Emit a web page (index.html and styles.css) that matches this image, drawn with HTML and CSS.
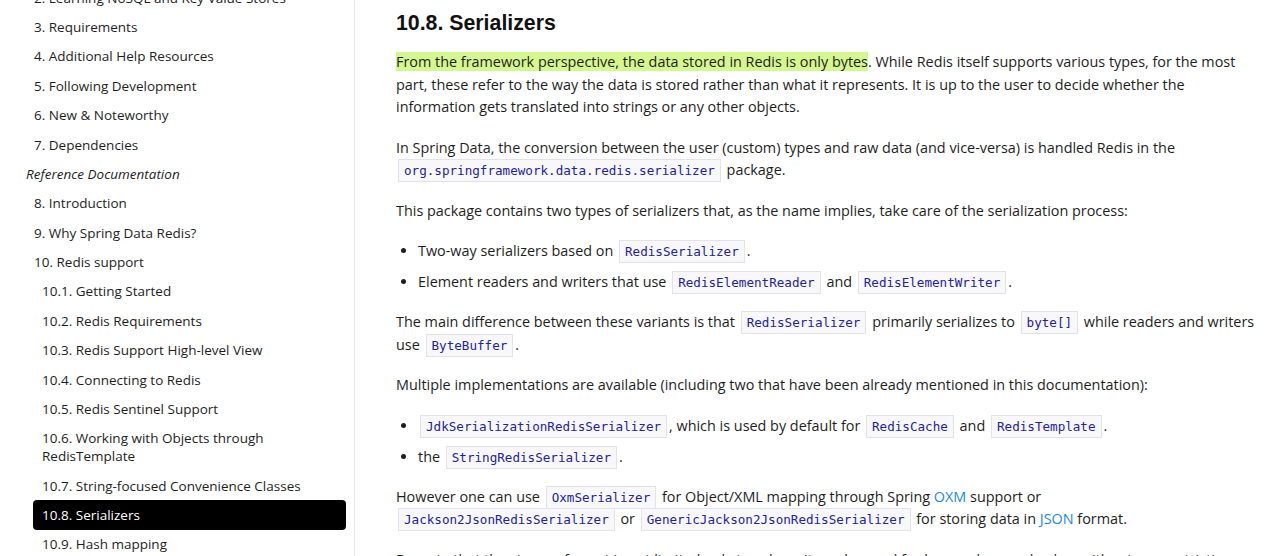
FILE: index.html
```html
<!DOCTYPE html>
<html lang="en">
<head>
  <meta charset="UTF-8">
  <meta name="viewport" content="width=device-width, initial-scale=1.0">
  <link rel="stylesheet" href="styles.css">
</head>
<body>

  <div class="page">
    <nav class="toc">
      <ul class="toc-list">
        <li><a href="#">2. Learning NoSQL and Key Value Stores</a></li>
        <li><a href="#">3. Requirements</a></li>
        <li><a href="#">4. Additional Help Resources</a></li>
        <li><a href="#">5. Following Development</a></li>
        <li><a href="#">6. New &amp; Noteworthy</a></li>
        <li><a href="#">7. Dependencies</a></li>
        <li class="toc-caption">Reference Documentation</li>
        <li><a href="#">8. Introduction</a></li>
        <li><a href="#">9. Why Spring Data Redis?</a></li>
        <li>
          <a href="#">10. Redis support</a>
          <ul class="toc-sub">
            <li><a href="#">10.1. Getting Started</a></li>
            <li><a href="#">10.2. Redis Requirements</a></li>
            <li><a href="#">10.3. Redis Support High-level View</a></li>
            <li><a href="#">10.4. Connecting to Redis</a></li>
            <li><a href="#">10.5. Redis Sentinel Support</a></li>
            <li><a href="#">10.6. Working with Objects through RedisTemplate</a></li>
            <li><a href="#">10.7. String-focused Convenience Classes</a></li>
            <li><a href="#" class="active">10.8. Serializers</a></li>
            <li><a href="#">10.9. Hash mapping</a></li>
          </ul>
        </li>
      </ul>
    </nav>

    <main class="content">
      <h2>10.8. Serializers</h2>

      <p><mark>From the framework perspective, the data stored in Redis is only bytes</mark>. While Redis itself supports various types, for the most part, these refer to the way the data is stored rather than what it represents. It is up to the user to decide whether the information gets translated into strings or any other objects.</p>

      <p>In Spring Data, the conversion between the user (custom) types and raw data (and vice-versa) is handled Redis in the <code>org.springframework.data.redis.serializer</code> package.</p>

      <p>This package contains two types of serializers that, as the name implies, take care of the serialization process:</p>

      <ul class="bullets">
        <li>Two-way serializers based on <code>RedisSerializer</code>.</li>
        <li>Element readers and writers that use <code>RedisElementReader</code> and <code>RedisElementWriter</code>.</li>
      </ul>

      <p>The main difference between these variants is that <code>RedisSerializer</code> primarily serializes to <code>byte[]</code> while readers and writers use <code>ByteBuffer</code>.</p>

      <p>Multiple implementations are available (including two that have been already mentioned in this documentation):</p>

      <ul class="bullets">
        <li><code>JdkSerializationRedisSerializer</code>, which is used by default for <code>RedisCache</code> and <code>RedisTemplate</code>.</li>
        <li>the <code>StringRedisSerializer</code>.</li>
      </ul>

      <p>However one can use <code>OxmSerializer</code> for Object/XML mapping through Spring <a href="#">OXM</a> support or <code>Jackson2JsonRedisSerializer</code> or <code>GenericJackson2JsonRedisSerializer</code> for storing data in <a href="#">JSON</a> format.</p>

      <p>Do note that the storage format is not limited only to values. It can be used for keys, values, or hashes without any restriction.</p>
    </main>
  </div>

</body>
</html>
```

FILE: styles.css
```css
body {
  margin: 0;
  padding: 0;
  background-color: #fff;
  color: #1e1e1e;
  font-family: "Open Sans", sans-serif;
  overflow: hidden;
}

.page {
  display: flex;
  align-items: flex-start;
  height: 556px;
  overflow: hidden;
}

/* sidebar */
.toc {
  box-sizing: border-box;
  width: 355px;
  flex-shrink: 0;
  padding: 0 8px 0 25px;
  border-right: 1px solid #e8e8e8;
  height: 600px;
}

.toc ul {
  list-style: none;
  margin: 0;
  padding: 0;
}

.toc-list {
  margin-top: -17px !important;
}

.toc a {
  display: block;
  padding: 5.7px 9px;
  font-size: 13.5px;
  line-height: 18px;
  color: #1e1e1e;
  text-decoration: none;
  border-radius: 4px;
}

.toc-caption {
  padding: 5.7px 1px;
  font-size: 13.5px;
  line-height: 18px;
  font-style: italic;
}

.toc-sub {
  margin-left: 8px !important;
}

.toc a.active {
  background-color: #000;
  color: #fff;
}

/* main article */
.content {
  width: 866px;
  padding: 10px 0 0 41px;
  font-size: 14.4px;
  line-height: 22.5px;
}

.content h2 {
  font-family: "Liberation Sans", Arial, sans-serif;
  font-size: 21.3px;
  font-weight: bold;
  line-height: 28px;
  margin: -1px 0 14px;
  color: #111;
}

.content p {
  margin: 0 0 18px;
}

.content mark {
  background-color: #d5f78f;
  color: inherit;
}

.content a {
  color: #1a8ae6;
  text-decoration: none;
}

.bullets {
  margin: 0 0 17.5px;
  padding-left: 22px;
}

.bullets li {
  margin-bottom: 8.5px;
}

.bullets li:last-child {
  margin-bottom: 0;
}

code {
  font-family: "DejaVu Sans Mono", monospace;
  font-size: 12.6px;
  line-height: 1;
  color: #2323a0;
  background-color: #f8f8fa;
  border: 1px solid #e2e2ea;
  padding: 3px 5px;
  margin: 0 2px;
}
```
